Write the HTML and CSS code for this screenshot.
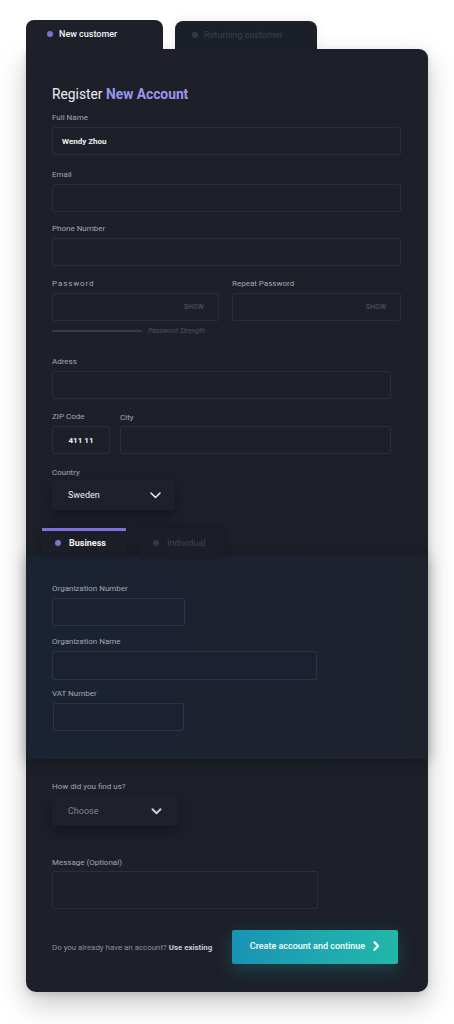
FILE: index.html
```html
<!DOCTYPE html>
<html lang="en">
<head>
<meta charset="utf-8">
<title>Register New Account</title>
<link rel="stylesheet" href="styles.css">
</head>
<body>
<div class="page">
  <div class="top-tabs">
    <div class="top-tab active"><span class="dot"></span>New customer</div>
    <div class="top-tab"><span class="dot"></span>Returning customer</div>
  </div>
  <div class="card">
    <h1 class="title">Register <strong>New Account</strong></h1>

    <div class="field f-first">
      <label class="label">Full Name</label>
      <div class="input"><span class="value">Wendy Zhou</span></div>
    </div>
    <div class="field f-email">
      <label class="label">Email</label>
      <div class="input"></div>
    </div>
    <div class="field f-phone">
      <label class="label">Phone Number</label>
      <div class="input"></div>
    </div>
    <div class="field pw-row">
      <div>
        <label class="label spaced">Password</label>
        <div class="input pw"><span class="show">SHOW</span></div>
      </div>
      <div>
        <label class="label">Repeat Password</label>
        <div class="input pw"><span class="show">SHOW</span></div>
      </div>
    </div>
    <div class="strength">
      <span class="strength-bar"></span>
      <span class="strength-text">Password Strength</span>
    </div>

    <div class="field f-adress narrow">
      <label class="label">Adress</label>
      <div class="input"></div>
    </div>
    <div class="field zip-row narrow">
      <div>
        <label class="label">ZIP Code</label>
        <div class="input center"><span class="value">411 11</span></div>
      </div>
      <div>
        <label class="label city">City</label>
        <div class="input"></div>
      </div>
    </div>
    <div class="field f-country">
      <label class="label">Country</label>
      <div class="select country">
        <span class="select-value">Sweden</span>
        <svg class="chev" width="11" height="7" viewBox="0 0 11 7"><path d="M1 1l4.5 4.5L10 1" fill="none" stroke="#e4e6eb" stroke-width="1.6" stroke-linecap="round" stroke-linejoin="round"/></svg>
      </div>
    </div>

    <div class="sub-tabs">
      <div class="sub-tab active"><span class="dot"></span>Business</div>
      <div class="sub-tab"><span class="dot"></span>Individual</div>
    </div>
    <div class="business">
      <div class="field f-org">
        <label class="label">Organization Number</label>
        <div class="input w-org"></div>
      </div>
      <div class="field f-tight">
        <label class="label">Organization Name</label>
        <div class="input w-name"></div>
      </div>
      <div class="field f-vat">
        <label class="label">VAT Number</label>
        <div class="input w-vat"></div>
      </div>
    </div>

    <div class="field f-find">
      <label class="label">How did you find us?</label>
      <div class="select choose">
        <span class="select-value muted">Choose</span>
        <svg class="chev" width="11" height="7" viewBox="0 0 11 7"><path d="M1.5 1.2l4 4 4-4" fill="none" stroke="#c9ccd3" stroke-width="2" stroke-linecap="round" stroke-linejoin="round"/></svg>
      </div>
    </div>
    <div class="field f-msg">
      <label class="label">Message (Optional)</label>
      <div class="input textarea"></div>
    </div>

    <div class="footer">
      <p class="existing">Do you already have an account? <strong>Use existing</strong></p>
      <button class="cta">Create account and continue
        <svg width="7" height="10" viewBox="0 0 7 10"><path d="M1.5 1.2L5 5 1.5 8.8" fill="none" stroke="#fff" stroke-width="2.2" stroke-linecap="round" stroke-linejoin="round"/></svg>
      </button>
    </div>
  </div>
</div>
</body>
</html>
```

FILE: styles.css
```css
* { box-sizing: border-box; }
html, body { margin: 0; padding: 0; background: #ffffff; }
body { font-family: Roboto, "Noto Sans", "Liberation Sans", sans-serif; }

.page {
  width: 454px;
  padding: 20px 26px 32px 26px;
}

.top-tabs {
  display: flex;
  align-items: flex-end;
  gap: 12px;
}
.top-tab {
  height: 28px;
  width: 142px;
  border-radius: 8px 8px 0 0;
  background: #1b1f28;
  color: #3b404d;
  font-size: 9px;
  display: flex;
  align-items: flex-start;
  padding: 9px 0 0 17px;
  gap: 6px;
  line-height: 11px;
  box-shadow: 0 -2px 8px rgba(0,0,0,0.08);
}
.top-tab .dot {
  width: 6px; height: 6px; border-radius: 50%;
  background: #333747;
  margin-top: 2px;
}
.top-tab.active {
  height: 29px;
  width: 137px;
  background: #1d2029;
  color: #f2f3f7;
  font-weight: 500;
  padding-left: 21px;
  box-shadow: none;
}
.top-tab.active .dot { background: #7c6fd6; }

.card {
  background: #1d2029;
  border-radius: 0 9px 10px 10px;
  padding: 36px 27px 28px 26px;
  box-shadow: 0 12px 28px rgba(0,0,0,0.22), 0 2px 6px rgba(0,0,0,0.12);
}

.title {
  margin: 0;
  font-size: 13.8px;
  line-height: 18px;
  font-weight: 400;
  color: #eceef3;
}
.title strong { color: #9a97ee; font-weight: 700; }

.field { margin-top: 13px; }
.field.f-first { margin-top: 10px; }
.field.f-email { margin-top: 15px; }
.field.f-phone { margin-top: 12px; }
.field.f-country { margin-top: 14px; }
.label {
  display: block;
  font-size: 8px;
  line-height: 10px;
  color: #a3a7b2;
  margin-bottom: 4px;
}
.label.spaced { letter-spacing: 0.9px; }
.label.city { margin-top: 1px; margin-bottom: 3px; }

.input {
  height: 28px;
  border: 1px solid #2a2e39;
  border-radius: 2px;
  background: #1d2029;
  display: flex;
  align-items: center;
  padding-left: 9px;
}
.value {
  font-size: 8px;
  font-weight: 700;
  color: #f1f2f5;
}
.input.center { justify-content: center; padding-left: 0; }

.pw-row {
  display: grid;
  grid-template-columns: 167px 169px;
  gap: 13px;
}
.input.pw { justify-content: flex-end; padding-right: 14px; }
.show {
  font-size: 6.5px;
  color: #5c6170;
  letter-spacing: 0.3px;
}

.strength {
  margin-top: 5px;
  display: flex;
  align-items: center;
  gap: 6px;
  height: 10px;
}
.strength-bar {
  width: 90px;
  height: 2px;
  border-radius: 1px;
  background: #363a49;
}
.strength-text {
  font-size: 7px;
  font-style: italic;
  color: #4c5262;
}

.narrow { width: 339px; }
.field.f-adress { margin-top: 21px; }
.zip-row {
  display: grid;
  grid-template-columns: 58px 1fr;
  gap: 10px;
}

.select {
  margin-top: -2px;
  height: 30px;
  background: #1e212b;
  border-radius: 3px;
  display: flex;
  align-items: center;
  justify-content: space-between;
  padding: 0 14px 0 16px;
  box-shadow: 0 5px 14px rgba(0,0,0,0.35);
}
.select.country { width: 123px; }
.select.choose { width: 126px; margin-top: 1px; padding-right: 16px; }
.select-value {
  font-size: 9px;
  color: #eef0f4;
}
.select-value.muted { color: #7d818d; }

.sub-tabs {
  margin: 18px 0 0 -10px;
  display: flex;
  gap: 14px;
}
.sub-tab {
  width: 85px;
  height: 27px;
  border-top: 2px solid transparent;
  display: flex;
  align-items: center;
  gap: 8px;
  padding-left: 13px;
  font-size: 9px;
  color: #3f4454;
  background: #1b1e27;
  box-shadow: 0 0 8px rgba(0,0,0,0.25);
}
.sub-tab .dot { width: 6px; height: 6px; border-radius: 50%; background: #343851; }
.sub-tab.active {
  width: 84px;
  border-top: 3px solid #7e6fdc;
  color: #f3f4f8;
  font-weight: 700;
}
.sub-tab.active .dot { background: #7c72d8; }

.business {
  margin: 0 -27px 0 -26px;
  padding: 29px 26px 28px 26px;
  background: linear-gradient(90deg, #1b2231 0%, #1c2230 60%, #1e222d 100%);
  box-shadow: 0 2px 14px rgba(0,0,0,0.28);
}
.business .field.f-org { margin-top: 0; }
.business .field.f-tight { margin-top: 11px; }
.business .field.f-vat { margin-top: 9px; }
.business .input { border-color: #2d3445; background: #1b2130; }
.w-org { width: 133px; }
.w-name { width: 265px; height: 29px; }
.w-vat { width: 131px; margin-left: 1px; }

.field.f-find { margin-top: 23px; }
.field.f-msg { margin-top: 32px; }
.textarea { width: 266px; height: 38px; margin-top: -1px; }

.footer {
  margin-top: 21px;
  display: flex;
  align-items: center;
  justify-content: space-between;
  padding-right: 3px;
}
.existing {
  margin: 0;
  font-size: 7.9px;
  color: #8b8f9b;
}
.existing strong { color: #c9ccd4; font-weight: 700; }
.cta {
  width: 166px;
  height: 34px;
  border: 0;
  border-radius: 2px;
  background: linear-gradient(90deg, #1893b4 0%, #1fa9b0 55%, #22b7a8 100%);
  color: #ffffff;
  font-family: inherit;
  font-size: 9px;
  font-weight: 500;
  display: flex;
  align-items: center;
  justify-content: center;
  gap: 8px;
  padding: 0 0 2px 0;
  box-shadow: 0 6px 18px rgba(24,160,170,0.28);
}
```
